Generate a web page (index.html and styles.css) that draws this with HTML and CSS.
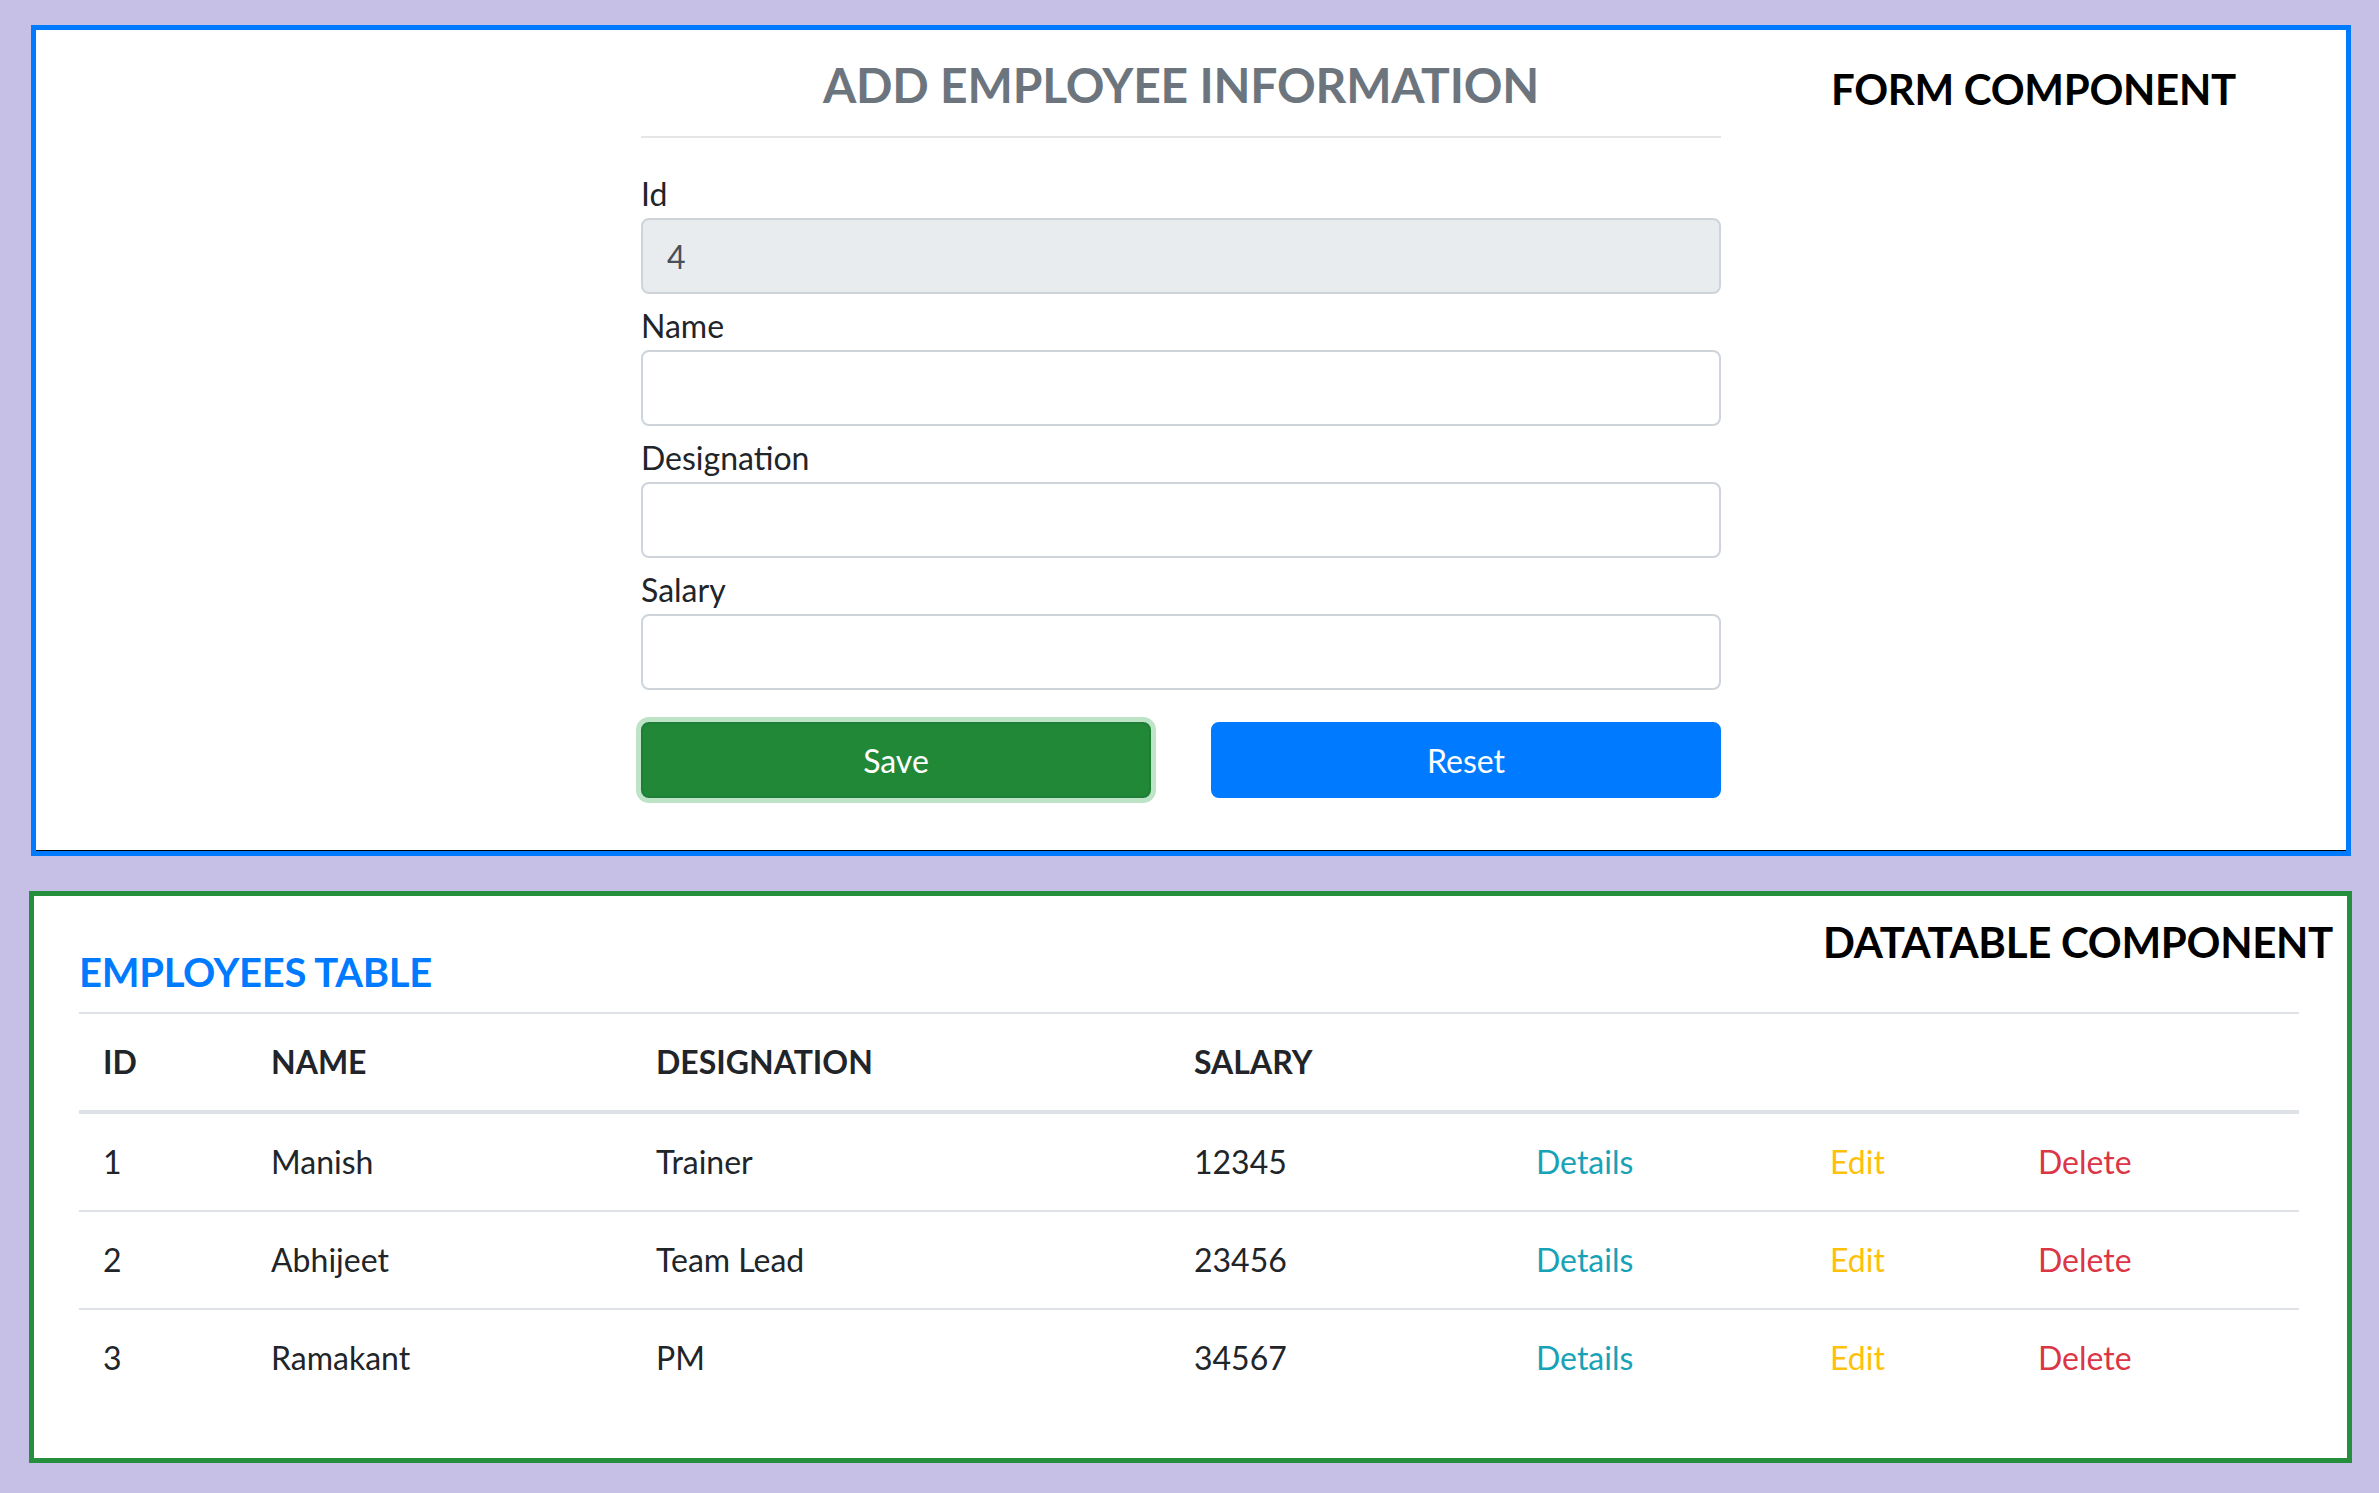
FILE: index.html
```html
<!DOCTYPE html>
<html lang="en">
<head>
<meta charset="utf-8">
<title>Employees</title>
<link rel="stylesheet" href="styles.css">
</head>
<body>
<main class="page">
  <section class="panel panel-form">
    <div class="form-layout">
      <div class="spacer"></div>
      <div class="form-col">
        <h4 class="form-title">ADD EMPLOYEE INFORMATION</h4>
        <div class="rule"></div>
        <div class="field">
          <label class="field-label" for="f-id">Id</label>
          <input class="control control-readonly" id="f-id" type="text" value="4" readonly>
        </div>
        <div class="field">
          <label class="field-label" for="f-name">Name</label>
          <input class="control" id="f-name" type="text">
        </div>
        <div class="field">
          <label class="field-label" for="f-des">Designation</label>
          <input class="control" id="f-des" type="text">
        </div>
        <div class="field">
          <label class="field-label" for="f-sal">Salary</label>
          <input class="control" id="f-sal" type="text">
        </div>
        <div class="actions">
          <button class="btn btn-save" type="button">Save</button>
          <button class="btn btn-reset" type="button">Reset</button>
        </div>
      </div>
      <div class="side-col">
        <h3 class="component-tag">FORM COMPONENT</h3>
      </div>
    </div>
  </section>

  <section class="panel panel-table">
    <div class="table-wrap">
      <div class="table-head">
        <h5 class="table-title">EMPLOYEES TABLE</h5>
        <h3 class="component-tag tag-table">DATATABLE COMPONENT</h3>
      </div>
      <table class="emp-table">
        <colgroup>
          <col class="c-id"><col class="c-name"><col class="c-des"><col class="c-sal"><col class="c-det"><col class="c-edit"><col class="c-del">
        </colgroup>
        <thead>
          <tr><th>ID</th><th>NAME</th><th>DESIGNATION</th><th>SALARY</th><th></th><th></th><th></th></tr>
        </thead>
        <tbody>
          <tr><td>1</td><td>Manish</td><td>Trainer</td><td>12345</td><td class="act act-details">Details</td><td class="act act-edit">Edit</td><td class="act act-delete">Delete</td></tr>
          <tr><td>2</td><td>Abhijeet</td><td>Team Lead</td><td>23456</td><td class="act act-details">Details</td><td class="act act-edit">Edit</td><td class="act act-delete">Delete</td></tr>
          <tr><td>3</td><td>Ramakant</td><td>PM</td><td>34567</td><td class="act act-details">Details</td><td class="act act-edit">Edit</td><td class="act act-delete">Delete</td></tr>
        </tbody>
      </table>
    </div>
  </section>
</main>
</body>
</html>
```
FILE: styles.css
```css
* { box-sizing: border-box; }

html, body {
  margin: 0;
  padding: 0;
}

body {
  background: #c7c0e6;
  font-family: Lato, "Noto Sans", "Liberation Sans", sans-serif;
  color: #212529;
  font-size: 32px;
  line-height: 48px;
}

.page {
  padding-top: 25px;
  width: 2379px;
}

.panel {
  background: #fff;
}

.panel-form {
  margin-left: 31px;
  width: 2320px;
  border: 5px solid #007bff;
}

.form-layout {
  display: grid;
  grid-template-columns: 605px 1080px 1fr;
  padding-bottom: 52px;
  border-bottom: 1px solid #000;
}

.form-col {
  padding-top: 26px;
}

.form-title {
  margin: 0;
  font-size: 48px;
  line-height: 58px;
  font-weight: 700;
  color: #6c757d;
  text-align: center;
  letter-spacing: -0.2px;
}

.rule {
  margin: 22px 0 32px;
  border-top: 2px solid #e6e6e6;
}

.field {
  margin-bottom: 8px;
}

.field-label {
  display: block;
  font-size: 32px;
  line-height: 48px;
}

.control {
  display: block;
  width: 100%;
  height: 76px;
  margin: 0;
  padding: 0 24px;
  border: 2px solid #ced4da;
  border-radius: 8px;
  background: #fff;
  font-family: Lato, "Noto Sans", "Liberation Sans", sans-serif;
  font-size: 32px;
  color: #495057;
  outline: none;
}

.control-readonly {
  background: #e9ecef;
}

.actions {
  display: grid;
  grid-template-columns: 510px 510px;
  column-gap: 60px;
  margin-top: 32px;
}

.btn {
  height: 76px;
  border-radius: 8px;
  font-family: Lato, "Noto Sans", "Liberation Sans", sans-serif;
  font-size: 32px;
  color: #fff;
  padding: 0;
  cursor: pointer;
}

.btn-save {
  background: #218838;
  border: 2px solid #1e7e34;
  box-shadow: 0 0 0 5px #bde4c6;
}

.btn-reset {
  background: #007bff;
  border: 2px solid #007bff;
}

.side-col {
  padding-top: 33px;
  padding-left: 110px;
}

.component-tag {
  margin: 0;
  font-size: 42px;
  line-height: 53px;
  font-weight: 700;
  color: #000;
  letter-spacing: -0.3px;
  white-space: nowrap;
}

.panel-table {
  margin-top: 35px;
  margin-left: 29px;
  width: 2323px;
  border: 5px solid #258f3d;
}

.table-wrap {
  padding: 0 48px 52px 45px;
}

.table-head {
  display: flex;
  justify-content: space-between;
  align-items: flex-start;
  margin-right: -34px;
}

.table-title {
  margin: 52px 0 16px;
  font-size: 40px;
  line-height: 48px;
  font-weight: 700;
  color: #007bff;
  letter-spacing: -0.3px;
}

.tag-table {
  margin-top: 20px;
}

.emp-table {
  width: 2220px;
  table-layout: fixed;
  border-collapse: separate;
  border-spacing: 0;
}

.c-id { width: 168px; }
.c-name { width: 385px; }
.c-des { width: 538px; }
.c-sal { width: 342px; }
.c-det { width: 294px; }
.c-edit { width: 208px; }
.c-del { width: 285px; }

.emp-table th {
  text-align: left;
  font-weight: 700;
  padding: 24px;
  line-height: 48px;
  border-top: 2px solid #dee2e6;
  border-bottom: 4px solid #dee2e6;
}

.emp-table td {
  padding: 24px;
  line-height: 48px;
  white-space: nowrap;
}

.emp-table tbody tr + tr td {
  border-top: 2px solid #dee2e6;
}

.act-details { color: #17a2b8; }
.act-edit { color: #ffc107; }
.act-delete { color: #dc3545; }
```
